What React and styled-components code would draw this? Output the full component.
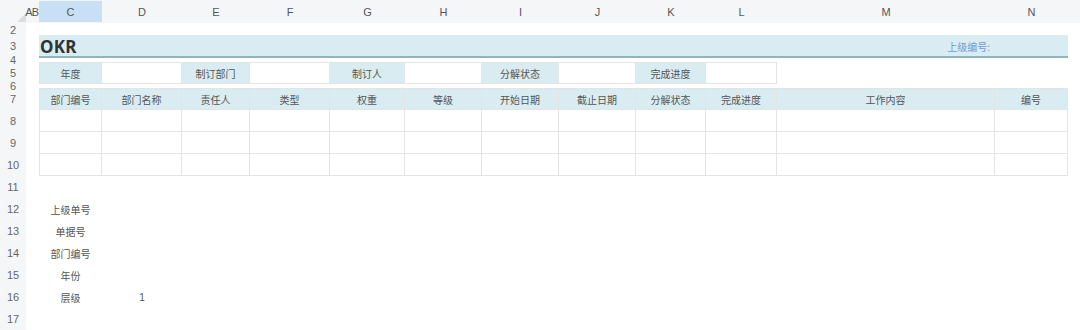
import styled, { createGlobalStyle } from 'styled-components';

const GlobalStyle = createGlobalStyle`
  html, body {
    margin: 0;
    padding: 0;
    background: #ffffff;
  }
  body {
    font-family: "Noto Sans", "Noto Sans CJK SC", sans-serif;
  }
`;

const COL_WIDTHS = [26, 6, 7, 63, 80, 68, 80, 75, 77, 77, 77, 70, 71, 218, 73];
const ROW_HEIGHTS = [2, 10, 23, 4, 22, 4, 22, 22, 22, 22, 22, 22, 22, 22, 22, 22, 22];
const LETTERS = ['A', 'B', 'C', 'D', 'E', 'F', 'G', 'H', 'I', 'J', 'K', 'L', 'M', 'N'];

// grid line of a sheet column letter (gutter is line 1, A is line 2)
const col = (letter) => LETTERS.indexOf(letter) + 2;
// grid line of a sheet row (header strip is line 1)
const row = (n) => n + 1;

const Sheet = styled.div`
  display: grid;
  grid-template-columns: ${COL_WIDTHS.map((w) => `${w}px`).join(' ')} 1fr;
  grid-template-rows: 23px ${ROW_HEIGHTS.map((h) => `${h}px`).join(' ')};
  width: 1080px;
  height: 330px;
  overflow: hidden;
  font-family: "Noto Sans CJK SC", "Noto Sans", sans-serif;
`;

const Gutter = styled.div`
  grid-column: 1;
  grid-row: 2 / -1;
  background: #f5f6f8;
`;

const RowNumber = styled.div`
  grid-column: 1;
  grid-row: ${(p) => p.$row};
  display: flex;
  align-items: ${(p) => (p.$tiny ? 'flex-end' : 'center')};
  justify-content: center;
  font-family: "Liberation Sans", Arial, sans-serif;
  font-size: 11px;
  line-height: 11px;
  color: #666;
  white-space: nowrap;
  overflow: visible;
`;

const HeaderStrip = styled.div`
  grid-column: 1 / -1;
  grid-row: 1;
  background: #f5f6f8;
  position: relative;
  z-index: 1;
`;

const Corner = styled.div`
  grid-column: 1;
  grid-row: 1;
  position: relative;
  z-index: 2;

  &::after {
    content: '';
    position: absolute;
    right: 0;
    bottom: 1px;
    border-style: solid;
    border-width: 0 0 9px 9px;
    border-color: transparent transparent #dcdde0 transparent;
  }
`;

const ColHead = styled.div`
  grid-column: ${(p) => p.$col};
  grid-row: 1;
  position: relative;
  z-index: 2;
  display: flex;
  align-items: center;
  justify-content: center;
  margin: 1px 0 1px;
  background: ${(p) => (p.$active ? '#c9dff6' : 'transparent')};
  font-family: "Liberation Sans", Arial, sans-serif;
  font-size: 11px;
  color: #555;
  overflow: visible;
  white-space: nowrap;
`;

const TitleBand = styled.div`
  grid-column: ${col('C')} / ${col('N') + 1};
  grid-row: ${row(3)};
  display: flex;
  align-items: center;
  justify-content: space-between;
  background: #d9ecf1;
  border-bottom: 2px solid #8fb4be;
  box-sizing: border-box;
  padding: 2px 0 0 1px;
`;

const Title = styled.span`
  font-family: "Noto Sans", "Liberation Sans", sans-serif;
  font-weight: 700;
  font-size: 17px;
  color: #2f3336;
  letter-spacing: 0.2px;
`;

const ParentNo = styled.span`
  font-size: 10px;
  color: #6d9bd3;
  margin-right: 78px;
`;

const Cell = styled.div`
  grid-column: ${(p) => p.$col};
  grid-row: ${(p) => p.$row};
  box-sizing: border-box;
  display: flex;
  align-items: center;
  justify-content: center;
  background: ${(p) => (p.$head ? '#d9ecf1' : '#ffffff')};
  border-right: 1px solid #e3e4e5;
  border-bottom: 1px solid #e3e4e5;
  border-left: ${(p) => (p.$first ? '1px solid #e3e4e5' : 'none')};
  border-top: ${(p) => (p.$top ? '1px solid #e3e4e5' : 'none')};
  font-size: 10px;
  color: #555;
  white-space: nowrap;
`;

const Label = styled.div`
  grid-column: ${(p) => p.$col};
  grid-row: ${(p) => p.$row};
  display: flex;
  align-items: center;
  justify-content: center;
  font-family: ${(p) =>
    p.$num ? '"Liberation Sans", Arial, sans-serif' : '"Noto Sans CJK SC", sans-serif'};
  font-size: 10px;
  color: #555;
  white-space: nowrap;
`;

const FORM = [
  { label: '年度', at: 'C' },
  { label: '制订部门', at: 'E' },
  { label: '制订人', at: 'G' },
  { label: '分解状态', at: 'I' },
  { label: '完成进度', at: 'K' },
];

const TABLE_HEAD = [
  ['C', '部门编号'],
  ['D', '部门名称'],
  ['E', '责任人'],
  ['F', '类型'],
  ['G', '权重'],
  ['H', '等级'],
  ['I', '开始日期'],
  ['J', '截止日期'],
  ['K', '分解状态'],
  ['L', '完成进度'],
  ['M', '工作内容'],
  ['N', '编号'],
];

const FOOT_LABELS = ['上级单号', '单据号', '部门编号', '年份', '层级'];

export default function App() {
  return (
    <>
      <GlobalStyle />
      <Sheet>
        <Gutter />
        {ROW_HEIGHTS.map((h, i) => (
          <RowNumber key={i} $row={row(i + 1)} $tiny={h < 3}>
            {i + 1}
          </RowNumber>
        ))}

        <HeaderStrip />
        <Corner />
        {LETTERS.map((l) => (
          <ColHead key={l} $col={col(l)} $active={l === 'C'}>
            {l}
          </ColHead>
        ))}

        <TitleBand>
          <Title>OKR</Title>
          <ParentNo>上级编号:</ParentNo>
        </TitleBand>

        {FORM.map(({ label, at }, i) => [
          <Cell key={`l${at}`} $col={col(at)} $row={row(5)} $head $top $first={i === 0}>
            {label}
          </Cell>,
          <Cell key={`v${at}`} $col={col(at) + 1} $row={row(5)} $top />,
        ])}

        {TABLE_HEAD.map(([at, label], i) => (
          <Cell key={`h${at}`} $col={col(at)} $row={row(7)} $head $top $first={i === 0}>
            {label}
          </Cell>
        ))}
        {[8, 9, 10].map((r) =>
          TABLE_HEAD.map(([at], i) => (
            <Cell key={`${r}${at}`} $col={col(at)} $row={row(r)} $first={i === 0} />
          ))
        )}

        {FOOT_LABELS.map((label, i) => (
          <Label key={label} $col={col('C')} $row={row(12 + i)}>
            {label}
          </Label>
        ))}
        <Label $col={col('D')} $row={row(16)} $num>
          1
        </Label>
      </Sheet>
    </>
  );
}
